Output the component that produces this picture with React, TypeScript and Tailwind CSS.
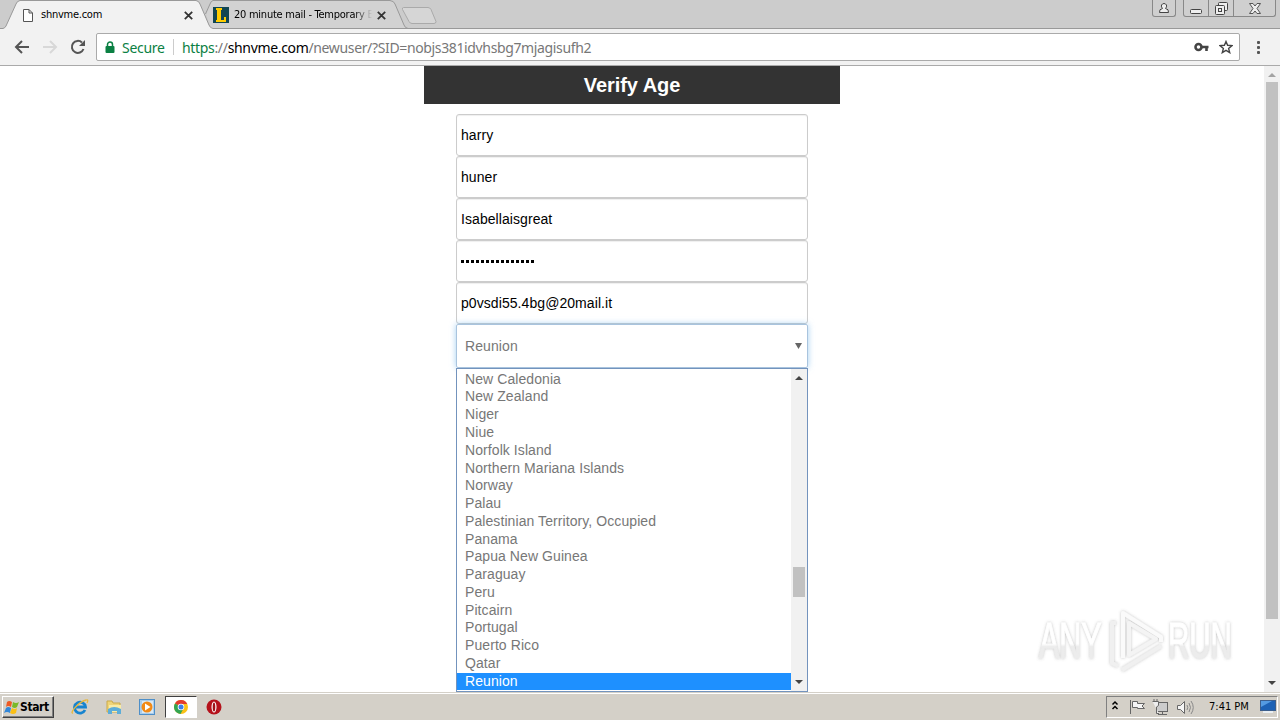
import type { ReactNode } from "react";

const countries = [
  "New Caledonia",
  "New Zealand",
  "Niger",
  "Niue",
  "Norfolk Island",
  "Northern Mariana Islands",
  "Norway",
  "Palau",
  "Palestinian Territory, Occupied",
  "Panama",
  "Papua New Guinea",
  "Paraguay",
  "Peru",
  "Pitcairn",
  "Portugal",
  "Puerto Rico",
  "Qatar",
  "Reunion",
];

const fields = [
  { key: "first", value: "harry" },
  { key: "last", value: "huner" },
  { key: "user", value: "Isabellaisgreat" },
  { key: "password", value: "" },
  { key: "email", value: "p0vsdi55.4bg@20mail.it" },
];

function CloseIcon() {
  return (
    <svg width="9" height="9" viewBox="0 0 9 9" className="shrink-0" fill="none" stroke="#333" strokeWidth="1.8">
      <path d="M.8.8 8.2 8.2M8.2.8.8 8.2" />
    </svg>
  );
}

function Arrow({ up = false, color = "#444" }: { up?: boolean; color?: string }) {
  return (
    <svg width="8" height="4" viewBox="0 0 8 4" fill={color}>
      <path d={up ? "M4 0 8 4H0Z" : "M0 0H8L4 4Z"} />
    </svg>
  );
}

function TabStrip() {
  return (
    <div className="flex h-[29px] items-start bg-[#ccc] font-['DejaVu_Sans_Condensed','DejaVu_Sans',sans-serif] text-[11px] text-black">
      <svg width="20" height="29" className="shrink-0">
        <path d="M0 28.5H3Q5 28 6 26L16 4Q17 1 20 .5V29H0Z" fill="#f2f2f2" />
        <path d="M0 28.5H3Q5 28 6 26L16 4Q17 1 20 .5" fill="none" stroke="#999" />
      </svg>
      <div className="flex h-[29px] w-[176px] items-center border-t border-[#999] bg-[#f2f2f2] pl-[3px]">
        <svg width="10" height="13" fill="#fff" stroke="#555">
          <path d="M.5.5H6L9.5 4V12.5H.5ZM6 .5V4H9.5" />
        </svg>
        <span className="ml-2 w-[143px] tracking-[-0.25px]">shnvme.com</span>
        <CloseIcon />
      </div>
      <svg width="17" height="29" className="shrink-0">
        <path d="M10 12 14 4Q15 1 17 .5V29H14Z" fill="#d2d2d2" />
        <path d="M0 .5Q3 1 4 4L13 25Q14 28 17 28.5V29H0Z" fill="#f2f2f2" />
        <path d="M0 .5Q3 1 4 4L13 25Q14 28 17 28.5M9.5 14 14 4Q15 1 17 .5" fill="none" stroke="#999" />
      </svg>
      <div className="flex h-[29px] w-[177px] items-center border-y border-[#999] bg-[#d2d2d2] pt-px">
        <svg width="16" height="16" className="shrink-0">
          <rect width="16" height="16" fill="#114653" />
          <path d="M3 1H9V3H8V13H11V10H13V15H3V13H4V3H3Z" fill="#fc0" />
        </svg>
        <span className="ml-[5px] w-[141px] bg-linear-to-r from-black from-85% to-transparent to-98% bg-clip-text tracking-[-0.25px] whitespace-nowrap text-transparent">
          20 minute mail - Temporary E
        </span>
        <span className="ml-[2px] flex">
          <CloseIcon />
        </span>
      </div>
      <svg width="50" height="29" className="shrink-0">
        <path d="M0 .5Q4 1 5 4L14 25Q15 28 18 28.5H0Z" fill="#d2d2d2" />
        <path d="M0 .5Q4 1 5 4L14 25Q15 28 18 28.5M0 28.5H50" fill="none" stroke="#999" />
        <path d="M13.5 7.5H38Q40 7.500 41 9.500L46 21.500Q46 23.500 44 23.500H22Q20 23.500 19 21.500L12.500 9.500Q12 7.500 13.500 7.500Z" fill="#d6d6d6" stroke="#aaa" />
      </svg>
      <div className="flex h-[29px] flex-1 border-b border-[#999]">
        <div className="ml-auto mr-[7px] flex h-[17px] w-[24px] items-center justify-center rounded-b-[3px] border border-t-0 border-[#888] bg-[#cfcfcf]">
          <svg width="12" height="12" fill="#eee" stroke="#444">
            <path d="M1.500 10.500Q1 7 4.500 6.500Q3 5 3.500 3Q4.500 1.500 6 1.500Q7.500 1.500 8.500 3Q9 5 7.500 6.500Q11 7 10.500 10.500Z" />
          </svg>
        </div>
        <div className="mr-[4px] flex h-[17px] w-[93px] rounded-b-[3px] border border-t-0 border-[#888] bg-[#cfcfcf]">
          <div className="flex w-[25px] items-center justify-center border-r border-[#888]">
            <svg width="12" height="13" fill="#eee" stroke="#444">
              <rect x=".5" y="7.500" width="11" height="4" rx="1" />
            </svg>
          </div>
          <div className="flex w-[25px] items-center justify-center border-r border-[#888]">
            <svg width="13" height="13" fill="#eee" stroke="#444">
              <rect x="3.500" y=".5" width="9" height="8" rx="1" />
              <rect x=".5" y="3.500" width="9" height="9" rx="1" />
              <rect x="3.500" y="6.500" width="3" height="3" />
            </svg>
          </div>
          <div className="flex flex-1 items-center justify-center">
            <svg width="12" height="11" fill="#eee" stroke="#555">
              <path d="M.5.5H4L6 3 8 .5H11.500L8 5.500 11.500 10.500H8L6 8 4 10.500H.5L4 5.500Z" />
            </svg>
          </div>
        </div>
      </div>
    </div>
  );
}

function AddressBar() {
  return (
    <div className="flex h-[37px] items-center border-b border-[#aaa] bg-[#f2f2f2] font-['Noto_Sans',sans-serif] text-[14px]">
      <svg width="96" height="36" className="shrink-0" fill="none" strokeWidth="2">
        <path d="M29 18H16.500M22 12 16 18 22 24" stroke="#555" />
        <path d="M43 18H55.500M50 12 56 18 50 24" stroke="#d8d8d8" />
        <path d="M83.500 20A6 6 0 1 1 82 13.500" stroke="#555" />
        <path d="M85 11V17H79Z" fill="#555" />
      </svg>
      <div className="flex h-[28px] w-[1144px] items-center rounded-[2px] border border-[#aaa] bg-white">
        <svg width="10" height="13" className="ml-[8px] shrink-0">
          <path d="M2.500 6V3.500a2.500 2.500 0 0 1 5 0V6" fill="none" stroke="#0b8043" strokeWidth="1.500" />
          <rect x=".5" y="5" width="9" height="7" rx="1" fill="#0b8043" />
        </svg>
        <span className="ml-[7px] w-[51px] tracking-[-0.3px] text-[#0b8043]">Secure</span>
        <span className="h-4 w-px bg-[#ccc]" />
        <span className="ml-[8px] flex-1 tracking-[-0.36px] whitespace-nowrap text-[#777]">
          <span className="tracking-[-0.33px]">
            <span className="text-[#0b8043]">https</span>://<span className="text-black">shnvme.com</span>
          </span>
          /newuser/?SID=nobjs381idvhsbg7mjagisufh2
        </span>
        <svg width="15" height="10" className="mr-[10px]" fill="none" stroke="#444">
          <circle cx="4.500" cy="5" r="3" strokeWidth="2.600" />
          <path d="M7 5H14.500M12.500 5V9" strokeWidth="2.600" />
        </svg>
        <svg width="14" height="14" viewBox="0 0 14 14" className="mr-[6px]" fill="none" stroke="#444" strokeWidth="1.400">
          <path d="M7 1.500 8.600 5.300 13 5.600 9.600 8.400 10.700 12.600 7 10.300 3.300 12.600 4.400 8.400 1 5.600 5.400 5.300Z" />
        </svg>
      </div>
      <svg width="40" height="36" fill="#555">
        <rect x="17" y="12" width="3" height="3" rx="1" />
        <rect x="17" y="17" width="3" height="3" rx="1" />
        <rect x="17" y="22" width="3" height="3" rx="1" />
      </svg>
    </div>
  );
}

function Watermark() {
  return (
    <svg
      width="220"
      height="80"
      viewBox="0 0 220 80"
      className="absolute top-[602px] left-[1031px]"
      fontFamily="'Liberation Sans', Arial, sans-serif"
      fontSize="50"
    >
      <defs>
        <filter id="soft" x="-10%" y="-10%" width="120%" height="120%">
          <feDropShadow dx="0" dy="0" stdDeviation="1.800" floodColor="#777" floodOpacity=".45" />
        </filter>
        <linearGradient id="fade" x1="0" y1="0" x2="0" y2="1">
          <stop offset=".55" stopColor="#fff" />
          <stop offset=".6" stopColor="#ececec" />
        </linearGradient>
      </defs>
      <g filter="url(#soft)" fill="url(#fade)">
        <g stroke="url(#fade)">
          <text transform="translate(8 56) scale(.61 1)">ANY</text>
          <text transform="translate(137 56) scale(.59 1)">RUN</text>
        </g>
        <g fill="none" stroke="#fafafa" strokeWidth="4" strokeLinejoin="round">
          <path d="M98 21V53L125 37Z" stroke="#f4f4f4" />
          <path d="M130 40V35L92 11V56" />
          <path d="M85 21H81V61L87 64M91 68 130 44" stroke="#f0f0f0" />
        </g>
      </g>
    </svg>
  );
}

function QuickLaunch({ children, active = false }: { children: ReactNode; active?: boolean }) {
  return (
    <div
      className={`flex h-[22px] w-[32px] items-center justify-center border ${
        active ? "border-t-[#404040] border-r-white border-b-white border-l-[#404040] bg-white" : "border-transparent"
      }`}
    >
      {children}
    </div>
  );
}

function Taskbar() {
  return (
    <div className="flex h-[28px] items-center border-t border-[#d4d0c8] bg-[#d4d0c8] font-['DejaVu_Sans_Condensed','DejaVu_Sans',sans-serif] text-[11px] text-black shadow-[inset_0_1px_0_#fff]">
      <div className="ml-[2px] flex h-[22px] w-[52px] items-center border border-t-white border-r-[#404040] border-b-[#404040] border-l-white font-bold shadow-[inset_-1px_-1px_0_#808080]">
        <svg width="16" height="16" className="ml-px shrink-0">
          <path d="M3 3Q5 1 8 3L7 8Q4 6 2 8Z" fill="#ee5a24" />
          <path d="M9 3Q12 5 15 3L13 8Q11 10 8 8Z" fill="#7ab929" />
          <path d="M2 9Q4 7 7 9L6 14Q3 12 0 14Z" fill="#3287d9" />
          <path d="M8 9Q11 11 13 9L12 14Q9 16 6 14Z" fill="#fbc015" />
        </svg>
        <span className="text-[12px] tracking-[-0.4px]">Start</span>
      </div>
      <div className="ml-[10px] flex gap-[1.6px]">
        <QuickLaunch>
          <svg width="18" height="16" fill="none">
            <path d="M14 11A5.500 5.500 0 1 1 14.500 8H5" stroke="#1784cf" strokeWidth="2.800" />
            <path d="M2 14C-2 15 7 3 15 1Q18 0 16 4" stroke="#e8b83d" strokeWidth="1.300" />
          </svg>
        </QuickLaunch>
        <QuickLaunch>
          <svg width="16" height="16">
            <path d="M1 2H6L7 4H14V13H1Z" fill="#efd477" stroke="#caa94b" />
            <path d="M3 6H15V13H3Z" fill="#f9eba6" />
            <path d="M2 15V10Q8 6 15 10V15H11V12H6V15Z" fill="#5dadd8" />
          </svg>
        </QuickLaunch>
        <QuickLaunch>
          <svg width="16" height="16">
            <rect x=".5" y=".5" width="15" height="15" fill="#a9cdec" stroke="#4e8fc8" />
            <rect x="3" y="2" width="11" height="12" fill="#d9e9f5" />
            <circle cx="8" cy="8" r="5.500" fill="#f28a16" />
            <path d="M6 4.500 11.500 8 6 11.500Z" fill="#fff" />
          </svg>
        </QuickLaunch>
        <QuickLaunch active>
          <svg width="14" height="14" viewBox="0 0 14 14">
            <circle cx="7" cy="7" r="7" fill="#fbc116" />
            <path d="M7 7 1 3.400A7 7 0 0 1 13.200 4H7Z" fill="#e33b2e" />
            <path d="M1 3.400A7 7 0 0 0 6.500 14L9.500 8.500 7 7Z" fill="#33a552" />
            <circle cx="7" cy="7" r="3.300" fill="#fff" />
            <circle cx="7" cy="7" r="2.500" fill="#3c7ee8" />
          </svg>
        </QuickLaunch>
        <QuickLaunch>
          <svg width="16" height="16">
            <circle cx="8" cy="8" r="7.500" fill="#b5121b" />
            <ellipse cx="8" cy="8" rx="2.500" ry="5.500" fill="#fff" />
            <ellipse cx="8" cy="8" rx="1.300" ry="4.600" fill="#a01218" />
          </svg>
        </QuickLaunch>
      </div>
      <div className="ml-auto mr-[2px] flex h-[22px] w-[172px] items-center border border-t-[#808080] border-r-white border-b-white border-l-[#808080]">
        <svg width="100" height="20" className="shrink-0" fill="none" stroke="#666">
          <path d="M5.500 7.500 8 5 10.500 7.500M5.500 12 8 9.500 10.500 12" stroke="#000" strokeWidth="1.500" />
          <path d="M23.500 3V17M25.500 4.500H30.500V6.500H37.500L35 9 37.500 11.500H30.500V10.500H25.500Z" fill="#f5f5f5" />
          <rect x="49.500" y="5.500" width="11" height="9" fill="#ccc" />
          <path d="M51 17.500H60M55.500 15V17M47 2V5M50 2V5M45.500 4.500H51.500V8.500L49.500 10V16.500H52" fill="#eee" />
          <path d="M70.500 8.500H73.500L77.500 4.500V16.500L73.500 12.500H70.500Z" fill="#f5f5f5" />
          <path d="M80 8Q81.500 10.500 80 13M82 6Q85 10.500 82 15M84 4Q88.500 10.500 84 17" stroke="#888" />
        </svg>
        <span className="ml-[2px] w-[51px] pt-[2px] whitespace-nowrap">7:41 PM</span>
        <svg width="16" height="13">
          <rect x=".5" y=".5" width="15" height="10" fill="#1d62b5" stroke="#3c5f8d" />
          <path d="M1 1H12L1 7Z" fill="#549be2" />
          <rect x="3" y="11" width="10" height="2" fill="#e9eef2" />
        </svg>
      </div>
    </div>
  );
}

export default function App() {
  return (
    <div className="relative flex h-[720px] w-[1280px] flex-col overflow-hidden bg-white">
      <TabStrip />
      <AddressBar />

      <main className="flex min-h-0 flex-1">
        <div className="flex flex-1 flex-col items-center font-['Liberation_Sans',Arial,sans-serif] text-[14px] text-black">
          <h1 className="h-[38px] w-[416px] bg-[#333] text-center text-[20px] leading-[38px] font-bold tracking-[-0.05px] text-white">
            Verify Age
          </h1>
          <form className="mt-[10px] w-[352px]">
            {fields.map((f) => (
              <div
                key={f.key}
                className="flex h-[42px] items-center rounded-[3px] border border-[#ccc] pl-[4px] tracking-[0.07px] shadow-[inset_0_1px_1px_#0001]"
              >
                {f.key === "password" ? (
                  <div className="flex gap-[2px]">
                    {Array.from({ length: 15 }, (_, i) => (
                      <span key={i} className="h-[3px] w-[3px] bg-black" />
                    ))}
                  </div>
                ) : (
                  f.value
                )}
              </div>
            ))}
            <div className="flex h-[44px] items-center justify-between rounded-[2px] border border-[#a9c4de] pr-[5px] pl-[8px] text-[#777] shadow-[0_0_6px_#66afe999]">
              <span className="tracking-[0.1px]">Reunion</span>
              <svg width="7" height="6" fill="#666">
                <path d="M0 0H7L3.500 6Z" />
              </svg>
            </div>

            {/* Open country list */}
            <div className="flex h-[324px] border border-[#7393bd] bg-white text-[#777]">
              <ul className="flex-1 pt-[1.7px]">
                {countries.map((c) => (
                  <li
                    key={c}
                    className={`h-[17.78px] pl-[8px] leading-[17px] tracking-[0.08px] ${
                      c === "Reunion" ? "bg-[#1e90ff] text-white" : ""
                    }`}
                  >
                    {c}
                  </li>
                ))}
              </ul>
              <div className="flex w-[16px] flex-col items-center bg-[#f1f1f1] py-[7px]">
                <Arrow up />
                <div className="mt-[187px] mb-auto h-[30px] w-[12px] bg-[#c1c1c1]" />
                <Arrow />
              </div>
            </div>
          </form>
        </div>
        <div className="flex w-[16px] flex-col items-center bg-[#f1f1f1] pt-[7px] pb-[7px]">
          <Arrow up color="#a3a3a3" />
          <div className="mt-[5px] mb-auto h-[537px] w-[12px] bg-[#c1c1c1]" />
          <Arrow />
        </div>
      </main>

      <Taskbar />
      <Watermark />
    </div>
  );
}
